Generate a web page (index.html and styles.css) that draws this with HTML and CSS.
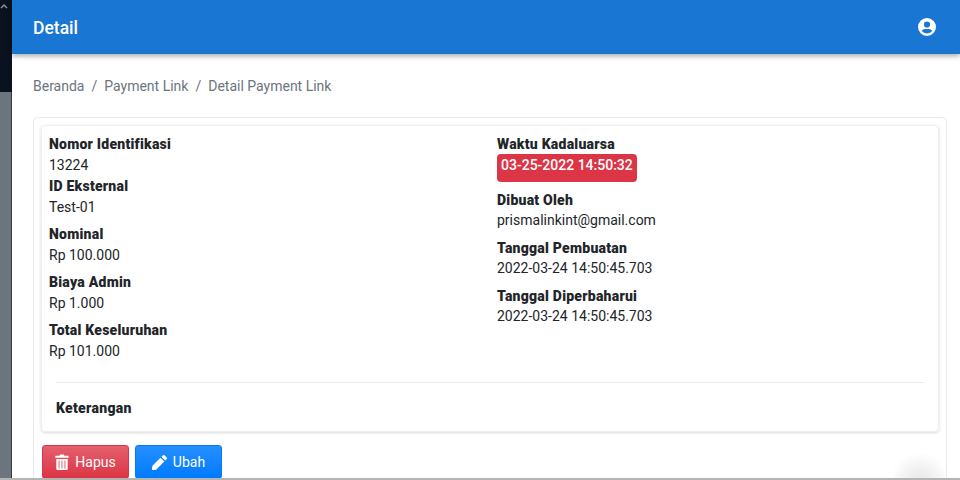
FILE: index.html
```html
<!DOCTYPE html>
<html lang="en">
<head>
  <meta charset="UTF-8" />
  <meta name="viewport" content="width=device-width, initial-scale=1.0"/>
  <title>Detail Payment Link</title>
  <link rel="stylesheet" href="styles.css">
</head>
<body>
  <div class="app">
    <aside class="sidebar">
      <div class="sidebar-top">
        <svg class="chevron" viewBox="0 0 8 6" width="8" height="6"><path d="M1 5 L4 2 L7 5" fill="none" stroke="#8a8f96" stroke-width="1.500"/></svg>
      </div>
      <div class="sidebar-rest"></div>
    </aside>
    <div class="main">
      <header class="topbar">
        <span class="topbar-title">Detail</span>
        <svg class="user-icon" viewBox="0 0 18 18" width="18" height="18">
          <path fill="#fff" fill-rule="evenodd" d="M9 0a9 9 0 1 0 0 18A9 9 0 0 0 9 0zm0 3.400a3.100 3.100 0 1 1 0 6.200 3.100 3.100 0 0 1 0-6.200zm0 12.200a7 7 0 0 1-5.300-2.500c.7-1.300 2-2.100 3.400-2.100h3.800c1.400 0 2.700.8 3.400 2.100A7 7 0 0 1 9 15.600z"/>
        </svg>
      </header>
      <div class="content">
        <nav class="breadcrumb">
          <span>Beranda</span><span class="sep">/</span><span>Payment Link</span><span class="sep">/</span><span>Detail Payment Link</span>
        </nav>
        <div class="card-outer">
          <div class="card-inner">
            <div class="info-grid">
              <div class="info-col">
                <div class="field tight"><b>Nomor Identifikasi</b><span>13224</span></div>
                <div class="field"><b>ID Eksternal</b><span>Test-01</span></div>
                <div class="field"><b>Nominal</b><span>Rp 100.000</span></div>
                <div class="field"><b>Biaya Admin</b><span>Rp 1.000</span></div>
                <div class="field"><b>Total Keseluruhan</b><span>Rp 101.000</span></div>
              </div>
              <div class="info-col">
                <div class="field"><b>Waktu Kadaluarsa</b><span class="badge-expired">03-25-2022 14:50:32</span></div>
                <div class="field"><b>Dibuat Oleh</b><span>prismalinkint@gmail.com</span></div>
                <div class="field"><b>Tanggal Pembuatan</b><span>2022-03-24 14:50:45.703</span></div>
                <div class="field"><b>Tanggal Diperbaharui</b><span>2022-03-24 14:50:45.703</span></div>
              </div>
            </div>
            <div class="note">
              <b>Keterangan</b>
            </div>
          </div>
          <div class="actions">
            <a class="btn btn-red">
              <svg viewBox="0 0 14 16" width="14" height="16">
                <path fill="#fff" d="M.7 1.700h3.800l.4-.9c.1-.2.3-.4.6-.4h2.900c.3 0 .5.2.6.4l.4.9h3.800c.2 0 .4.2.4.4v1.300c0 .2-.2.4-.4.4H.7c-.2 0-.4-.2-.4-.4V2.100c0-.2.2-.4.4-.4zM1.300 5h11.400v9.700c0 .7-.6 1.300-1.300 1.300H2.600c-.7 0-1.300-.6-1.300-1.300z"/>
                <path fill="#e77f8a" d="M3.500 6.600h1.200v7.800H3.500zM6.400 6.600h1.200v7.800H6.400zM9.300 6.600h1.200v7.800H9.300z"/>
              </svg>
              Hapus
            </a>
            <a class="btn btn-blue">
              <svg viewBox="0 0 16 16" width="15" height="15"><path fill="#fff" d="M9.100 2.900l4 4-8.700 8.700-3.600.4a.8.8 0 0 1-.8-.9l.4-3.600zM15.500 4.500l-1.400 1.400-4-4 1.400-1.400a1.500 1.500 0 0 1 2.100 0l1.900 1.900a1.500 1.500 0 0 1 0 2.100z"/></svg>
              Ubah
            </a>
          </div>
        </div>
      </div>
    </div>
    <div class="fab-shadow"></div>
  </div>
  <div class="bottom-line"></div>
</body>
</html>
```

FILE: styles.css
```css
* {
  box-sizing: border-box;
}

html, body {
  margin: 0;
  padding: 0;
  height: 480px;
  overflow: hidden;
  background: #fff;
}

body {
  font-family: Roboto, "Liberation Sans", sans-serif;
  font-size: 14px;
  line-height: 21px;
  color: #212529;
}

.app {
  position: relative;
  display: flex;
  height: 478px;
  overflow: hidden;
}

.bottom-line {
  height: 2px;
  background: #b4b4b4;
}

.sidebar {
  width: 12px;
  flex: none;
  display: flex;
  flex-direction: column;
}

.sidebar-top {
  height: 92px;
  background: #0a121f;
  padding: 3px 0 0 0;
  line-height: 0;
}

.sidebar-rest {
  flex: 1;
  background: #6c757d;
  border-right: 1px solid #343a40;
}

.main {
  flex: 1;
  min-width: 0;
  display: flex;
  flex-direction: column;
}

.topbar {
  height: 54px;
  flex: none;
  background: #1976d2;
  color: #fff;
  display: flex;
  align-items: center;
  justify-content: space-between;
  padding: 2px 24px 0 21px;
  box-shadow: 0 2px 5px rgba(0, 0, 0, 0.35);
  position: relative;
}

.user-icon {
  margin-top: -3px;
}

.topbar-title {
  font-size: 17.5px;
  font-weight: 500;
}

.content {
  padding: 22px 13px 0 21px;
}

.breadcrumb {
  display: flex;
  color: #6c757d;
  margin-bottom: 20px;
}

.sep {
  padding: 0 7px;
}

.card-outer {
  border: 1px solid #e9ecef;
  border-radius: 4px;
  padding: 7px;
}

.card-inner {
  border-radius: 4px;
  border: 1px solid #eceef0;
  box-shadow: 0 1px 3px rgba(0, 0, 0, 0.15);
  padding: 8.2px 7px 0 7px;
  height: 307px;
}

.info-grid {
  display: grid;
  grid-template-columns: 448px 1fr;
  height: 247.8px;
  line-height: 20.5px;
}

.field {
  margin-bottom: 7px;
}

.field.tight {
  margin-bottom: 1.3px;
}

.field b {
  display: block;
  font-weight: 900;
  letter-spacing: 0.24px;
}

.field span {
  display: block;
}

.field .badge-expired {
  display: inline-block;
  background: #dc3545;
  color: #fff;
  font-weight: 500;
  border-radius: 4px;
  padding: 0 4px;
  height: 28px;
  line-height: 22px;
  margin: -1px 0 1px;
  vertical-align: top;
}

.note {
  margin: 0 7px 0 7px;
  border-top: 1px solid #e9ecef;
  padding-top: 15px;
}

.note b {
  font-weight: 900;
  letter-spacing: 0.3px;
}

.actions {
  display: flex;
  gap: 6px;
  margin-top: 13px;
  padding-left: 1px;
}

.btn {
  display: inline-flex;
  align-items: center;
  justify-content: center;
  gap: 6px;
  height: 34px;
  width: 87px;
  border-radius: 3px;
  color: #fff;
}

.btn-red {
  background: linear-gradient(#e4606d, #dc3545);
  border: 1px solid #dc3545;
}

.btn-blue {
  background: linear-gradient(#268fff, #007bff);
  border: 1px solid #007bff;
}

.fab-shadow {
  position: absolute;
  right: 10px;
  bottom: -34px;
  width: 60px;
  height: 60px;
  border-radius: 50%;
  background: radial-gradient(circle, rgba(0, 0, 0, 0.1), rgba(0, 0, 0, 0) 70%);
}
```
